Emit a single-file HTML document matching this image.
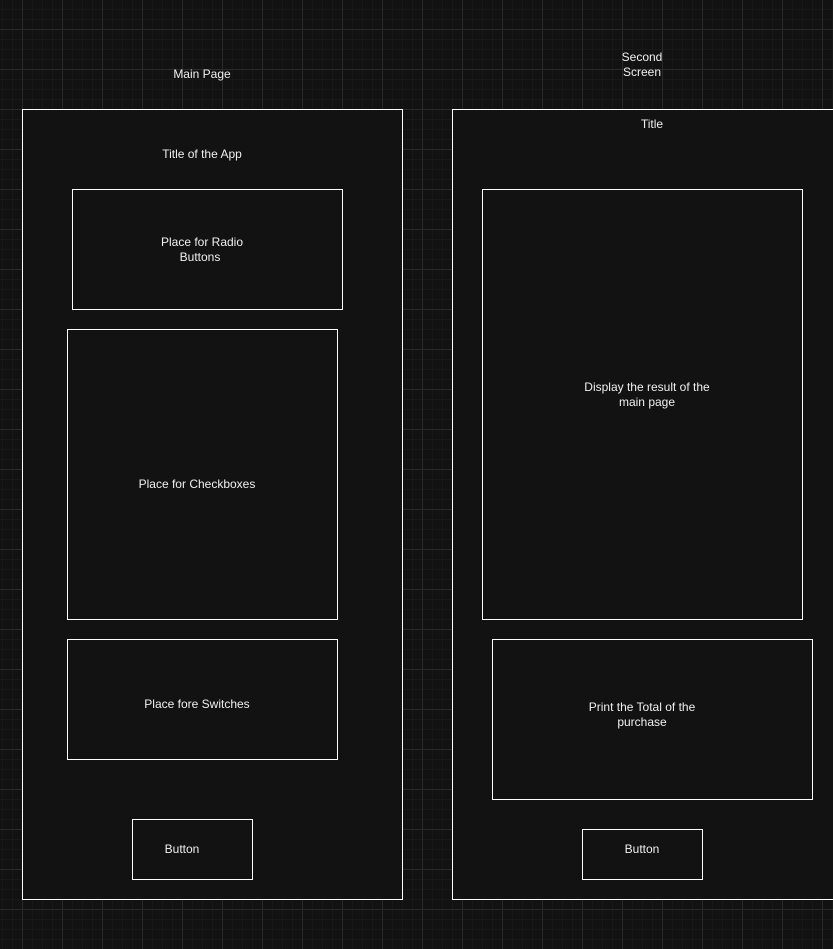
<!DOCTYPE html>
<html><head><style>
html,body{margin:0;padding:0;background:#121212;}
svg{display:block}
text{font-family:"Liberation Sans",sans-serif;font-size:12px;fill:#f0f0f0;text-anchor:middle}
</style></head><body>
<svg width="833" height="949" xmlns="http://www.w3.org/2000/svg">
<defs>
<pattern id="minor" x="2" y="9" width="10" height="10" patternUnits="userSpaceOnUse">
<path d="M0.5 0V10M0 0.5H10" stroke="#181818" stroke-width="1" fill="none"/>
</pattern>
<pattern id="major" x="22" y="29" width="40" height="40" patternUnits="userSpaceOnUse">
<path d="M0.5 0V40M0 0.5H40" stroke="#2a2a2a" stroke-width="1" fill="none"/>
</pattern>
</defs>
<rect width="833" height="949" fill="#121212"/>
<rect width="833" height="949" fill="url(#minor)"/>
<rect width="833" height="949" fill="url(#major)"/>
<g fill="#121212" stroke="#ffffff" stroke-width="1">
<rect x="22.5" y="109.5" width="380" height="790"/>
<rect x="452.5" y="109.5" width="390" height="790"/>
<rect x="72.5" y="189.5" width="270" height="120"/>
<rect x="67.5" y="329.5" width="270" height="290"/>
<rect x="67.5" y="639.5" width="270" height="120"/>
<rect x="132.5" y="819.5" width="120" height="60"/>
<rect x="482.5" y="189.5" width="320" height="430"/>
<rect x="492.5" y="639.5" width="320" height="160"/>
<rect x="582.5" y="829.5" width="120" height="50"/>
</g>
<text x="202" y="78">Main Page</text>
<text x="642" y="61">Second</text>
<text x="642" y="76">Screen</text>
<text x="202" y="158">Title of the App</text>
<text x="202" y="246">Place for Radio</text>
<text x="200" y="261">Buttons</text>
<text x="197" y="488">Place for Checkboxes</text>
<text x="197" y="708">Place fore Switches</text>
<text x="182" y="853">Button</text>
<text x="652" y="128">Title</text>
<text x="647" y="391">Display the result of the</text>
<text x="647" y="406">main page</text>
<text x="642" y="711">Print the Total of the</text>
<text x="642" y="726">purchase</text>
<text x="642" y="853">Button</text>
</svg>
</body></html>
